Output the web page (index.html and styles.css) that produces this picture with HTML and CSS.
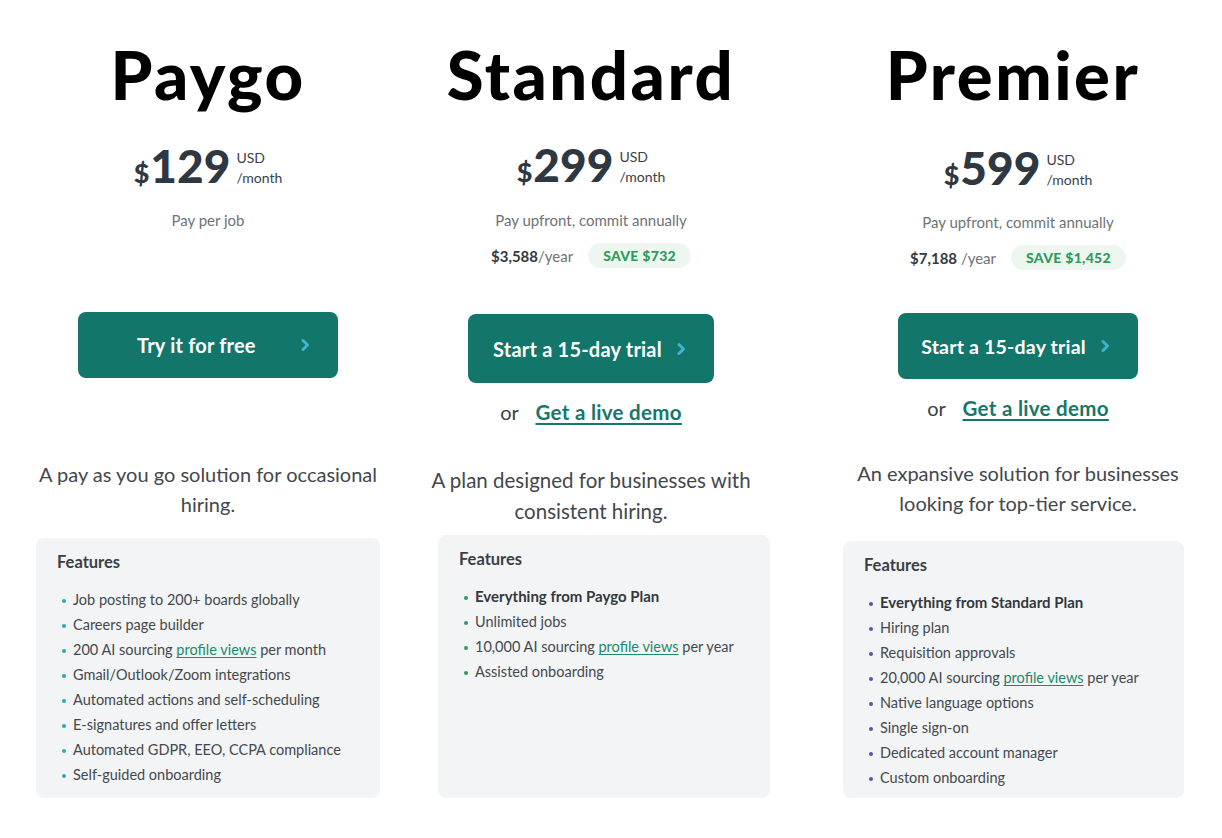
FILE: index.html
```html
<!DOCTYPE html>
<html lang="en">
<head>
  <meta charset="UTF-8">
  <meta name="viewport" content="width=device-width, initial-scale=1.0">
  <title>Pricing plans</title>
  <link rel="stylesheet" href="styles.css">
</head>
<body>

  <main class="plans">

    <!-- Paygo -->
    <section class="plan plan-paygo">
      <h1 class="plan-name">Paygo</h1>
      <div class="price"><span class="currency">$</span><span class="amount">129</span><span class="unit">USD<br>/month</span></div>
      <p class="billing">Pay per job</p>
      <a class="cta" href="#">
        <span>Try it for free</span>
        <svg width="9" height="14" viewBox="0 0 9 14"><path d="M2 2.5l4.5 4.5L2 11.5" fill="none" stroke="#3db6ca" stroke-width="3" stroke-linecap="round" stroke-linejoin="round"/></svg>
      </a>
      <p class="summary">A pay as you go solution for occasional hiring.</p>
      <div class="features">
        <h3>Features</h3>
        <ul>
          <li>Job posting to 200+ boards globally</li>
          <li>Careers page builder</li>
          <li>200 AI sourcing <a href="#">profile views</a> per month</li>
          <li>Gmail/Outlook/Zoom integrations</li>
          <li>Automated actions and self-scheduling</li>
          <li>E-signatures and offer letters</li>
          <li>Automated GDPR, EEO, CCPA compliance</li>
          <li>Self-guided onboarding</li>
        </ul>
      </div>
    </section>

    <!-- Standard -->
    <section class="plan plan-standard">
      <h1 class="plan-name">Standard</h1>
      <div class="price"><span class="currency">$</span><span class="amount">299</span><span class="unit">USD<br>/month</span></div>
      <p class="billing">Pay upfront, commit annually</p>
      <div class="yearly">
        <span class="yearly-total"><b>$3,588</b>/year</span>
        <span class="save">SAVE $732</span>
      </div>
      <a class="cta" href="#">
        <span>Start a 15-day trial</span>
        <svg width="9" height="14" viewBox="0 0 9 14"><path d="M2 2.5l4.5 4.5L2 11.5" fill="none" stroke="#3db6ca" stroke-width="3" stroke-linecap="round" stroke-linejoin="round"/></svg>
      </a>
      <p class="demo">or <a href="#">Get a live demo</a></p>
      <p class="summary">A plan designed for businesses with consistent hiring.</p>
      <div class="features">
        <h3>Features</h3>
        <ul>
          <li><b>Everything from Paygo Plan</b></li>
          <li>Unlimited jobs</li>
          <li>10,000 AI sourcing <a href="#">profile views</a> per year</li>
          <li>Assisted onboarding</li>
        </ul>
      </div>
    </section>

    <!-- Premier -->
    <section class="plan plan-premier">
      <h1 class="plan-name">Premier</h1>
      <div class="price"><span class="currency">$</span><span class="amount">599</span><span class="unit">USD<br>/month</span></div>
      <p class="billing">Pay upfront, commit annually</p>
      <div class="yearly">
        <span class="yearly-total"><b>$7,188</b> /year</span>
        <span class="save">SAVE $1,452</span>
      </div>
      <a class="cta" href="#">
        <span>Start a 15-day trial</span>
        <svg width="9" height="14" viewBox="0 0 9 14"><path d="M2 2.5l4.5 4.5L2 11.5" fill="none" stroke="#3db6ca" stroke-width="3" stroke-linecap="round" stroke-linejoin="round"/></svg>
      </a>
      <p class="demo">or <a href="#">Get a live demo</a></p>
      <p class="summary">An expansive solution for businesses looking for top-tier service.</p>
      <div class="features">
        <h3>Features</h3>
        <ul>
          <li><b>Everything from Standard Plan</b></li>
          <li>Hiring plan</li>
          <li>Requisition approvals</li>
          <li>20,000 AI sourcing <a href="#">profile views</a> per year</li>
          <li>Native language options</li>
          <li>Single sign-on</li>
          <li>Dedicated account manager</li>
          <li>Custom onboarding</li>
        </ul>
      </div>
    </section>

  </main>

</body>
</html>
```

FILE: styles.css
```css
body {
  margin: 0;
  padding: 0;
  background-color: #fff;
  font-family: Lato, "Open Sans", sans-serif;
  color: #42474c;
}

.plans {
  display: flex;
  height: 798px;
  padding-left: 36px;
  padding-top: 39px;
  box-sizing: border-box;
}

.plan {
  display: flex;
  flex-direction: column;
  align-items: center;
  text-align: center;
}

.plan-paygo {
  width: 344px;
}

.plan-standard {
  width: 360px;
  margin-left: 31px;
}

.plan-premier {
  width: 350px;
  margin-left: 72px;
}

.plan-name {
  margin: 0;
  font-family: Lato, sans-serif;
  font-weight: 900;
  font-size: 67px;
  line-height: 70px;
  letter-spacing: 2.5px;
  color: #000;
}

/* price */

.price {
  margin-top: 33px;
  font-size: 46px;
  line-height: 46px;
  color: #2f3842;
  white-space: nowrap;
}

.currency {
  font-size: 27px;
  font-weight: 900;
  margin-right: 1px;
}

.amount {
  font-weight: 900;
}

.unit {
  display: inline-block;
  margin-left: 6px;
  font-size: 14px;
  line-height: 20px;
  text-align: left;
  color: #3a4149;
}

.billing {
  margin: 15px 0 0;
  font-size: 15px;
  line-height: 20px;
  color: #6e7378;
}

.yearly {
  display: flex;
  align-items: center;
  gap: 15px;
  margin-top: 13px;
  height: 25px;
}

.yearly-total {
  font-size: 15px;
  color: #6e7378;
}

.yearly-total b {
  color: #343a40;
}

.save {
  display: flex;
  align-items: center;
  height: 25px;
  padding: 0 15px;
  border-radius: 13px;
  background-color: #eef7ef;
  color: #2c9c5c;
  font-size: 14px;
  font-weight: 900;
  letter-spacing: 0.3px;
}

/* buttons */

.cta {
  display: flex;
  align-items: center;
  justify-content: space-between;
  gap: 15px;
  box-sizing: border-box;
  height: 69px;
  margin-top: 46px;
  padding: 0 28px 0 25px;
  border-radius: 8px;
  background-color: #12766a;
  color: #fff;
  font-size: 20px;
  font-weight: 700;
  letter-spacing: 0.2px;
  text-decoration: none;
}

.cta svg {
  flex: none;
}

.demo {
  margin: 17px 0 0;
  font-size: 20px;
  line-height: 24px;
  color: #3b4045;
}

.demo a {
  margin-left: 12px;
  color: #15786a;
  font-size: 20.5px;
  font-weight: 700;
  letter-spacing: 0.3px;
  text-decoration-thickness: 2px;
  text-underline-offset: 3px;
}

.summary {
  margin: 41px 0 0;
  max-width: 344px;
  font-size: 20px;
  line-height: 31px;
  color: #43474c;
}

/* features */

.features {
  flex: 1;
  box-sizing: border-box;
  margin-top: 8px;
  padding: 14px 21px 0;
  border-radius: 8px;
  background-color: #f2f4f5;
  text-align: left;
}

.features h3 {
  margin: 0;
  font-size: 16.5px;
  line-height: 20px;
  font-weight: 700;
  color: #3a3f45;
}

.features ul {
  margin: 15px 0 0;
  padding-left: 16px;
  list-style: none;
}

.features li {
  font-size: 14.5px;
  line-height: 25px;
  color: #44494e;
}

.features li::before {
  content: "";
  display: inline-block;
  width: 4px;
  height: 4px;
  margin: 0 7px 0 -11px;
  border-radius: 50%;
  background-color: #2aa9b6;
  vertical-align: middle;
}

.features li b {
  font-size: 15px;
  color: #33383d;
}

.features a {
  color: #1d8a6c;
  text-underline-offset: 2px;
}

/* per-plan tweaks */

.plan-paygo .price {
  margin-top: 34px;
}

.plan-paygo .billing {
  margin-top: 14px;
}

.plan-paygo .cta {
  width: 260px;
  height: 66px;
  margin-top: 82px;
  padding-left: 59px;
}

.plan-paygo .summary {
  margin-top: 81px;
  line-height: 30px;
}

.plan-paygo .features {
  width: 344px;
  margin-top: 19px;
}

.plan-standard .summary {
  font-size: 20.5px;
}

.plan-standard .features {
  width: 332px;
  margin-left: 26px;
}

.plan-standard .features li::before {
  background-color: #2f9a68;
}

.plan-premier .plan-name {
  margin-right: 10px;
}

.plan-premier .price {
  margin-top: 36px;
}

.plan-premier .billing {
  margin-top: 14px;
}

.plan-premier .cta {
  height: 66px;
  margin-top: 43px;
  padding-left: 23px;
  font-size: 19.5px;
}

.plan-premier .summary {
  margin-top: 38px;
  line-height: 30px;
}

.plan-premier .features {
  width: 341px;
  margin-right: 9px;
  margin-top: 23px;
}

.plan-premier .features li::before {
  background-color: #5a53a6;
}
```
